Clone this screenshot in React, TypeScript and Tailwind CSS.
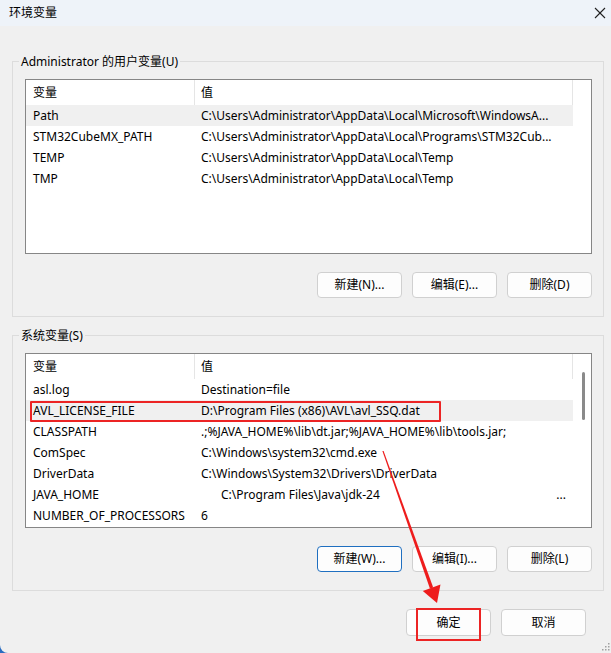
type Row = { name: string; value: string; pad?: boolean; more?: boolean; selected?: boolean; marked?: boolean };

const userVars: Row[] = [
  { name: "Path", value: "C:\\Users\\Administrator\\AppData\\Local\\Microsoft\\WindowsA...", selected: true },
  { name: "STM32CubeMX_PATH", value: "C:\\Users\\Administrator\\AppData\\Local\\Programs\\STM32Cub..." },
  { name: "TEMP", value: "C:\\Users\\Administrator\\AppData\\Local\\Temp" },
  { name: "TMP", value: "C:\\Users\\Administrator\\AppData\\Local\\Temp" },
];

const systemVars: Row[] = [
  { name: "asl.log", value: "Destination=file" },
  { name: "AVL_LICENSE_FILE", value: "D:\\Program Files (x86)\\AVL\\avl_SSQ.dat", selected: true, marked: true },
  { name: "CLASSPATH", value: ".;%JAVA_HOME%\\lib\\dt.jar;%JAVA_HOME%\\lib\\tools.jar;" },
  { name: "ComSpec", value: "C:\\Windows\\system32\\cmd.exe" },
  { name: "DriverData", value: "C:\\Windows\\System32\\Drivers\\DriverData" },
  { name: "JAVA_HOME", value: "C:\\Program Files\\Java\\jdk-24", pad: true, more: true },
  { name: "NUMBER_OF_PROCESSORS", value: "6" },
];

const VarList = ({ rows, scroll }: { rows: Row[]; scroll?: boolean }) => (
  <div className="flex h-[175px] w-full border border-[#868686] bg-white">
    <div className="w-[547px] overflow-hidden">
      <div className="flex h-[25px] items-center border-r border-[#e5e5e5]">
        <div className="flex h-full w-[169px] shrink-0 items-center border-r border-[#e5e5e5] pl-[7px]">变量</div>
        <div className="pl-[6px]">值</div>
      </div>
      {rows.map((r) => (
        <div key={r.name} className={`relative flex h-[21px] items-center whitespace-nowrap ${r.selected ? "bg-[#f0f0f0]" : ""}`}>
          <div className="w-[169px] shrink-0 pl-[7px]">{r.name}</div>
          <div className={`flex flex-1 ${r.pad ? "pl-[26px]" : "pl-[6px]"}`}>
            <span>{r.value}</span>
            {r.more && <span className="ml-auto pr-[7px]">...</span>}
          </div>
          {r.marked && <div className="absolute left-[4px] top-[1px] h-[21px] w-[411px] rounded-[1px] border-2 border-[#ec2424]" />}
        </div>
      ))}
    </div>
    <div className="flex w-[18px] justify-center pl-[2px] pt-[18px]">
      {scroll && <div className="h-[48px] w-[3px] rounded-full bg-[#8a8a8a]" />}
    </div>
  </div>
);

const Btn = ({ label, focus }: { label: string; focus?: boolean }) => (
  <button
    className={`h-full w-[85px] rounded-[4px] border bg-[#fdfdfd] text-[12px] text-black ${
      focus ? "border-[#1f6fc0]" : "border-[#d0d0d0]"
    }`}
  >
    {label}
  </button>
);

const Group = ({ title, children, top }: { title: string; children: React.ReactNode; top: string }) => (
  <div className={`ml-[12px] w-[592px] border border-[#dcdcdc] pl-[12px] pr-[11px] pb-[18px] ${top}`}>
    <div className="-mt-[9px] -ml-[6px] w-fit bg-[#f0f0f0] px-[2px] leading-[17px]">{title}</div>
    {children}
  </div>
);

export default function App() {
  return (
    <div className="h-[653px] w-[611px] bg-[#2a6cc0]">
      <div
        className="relative h-full w-full overflow-hidden rounded-bl-[8px] bg-[#f0f0f0] text-[12px] text-black"
        style={{ fontFamily: '"Noto Sans", "Noto Sans CJK SC", sans-serif' }}
      >
        <div className="flex h-[26px] w-[611px] items-center bg-[#eef3f9] pl-[9px]">
          <span>环境变量</span>
          <span className="ml-auto mr-[5px] flex h-[12px] w-[12px] items-center justify-center">
            <svg width="12" height="12" viewBox="0 0 12 12" style={{ display: "block" }}>
              <line x1="1" y1="1" x2="11" y2="11" stroke="#222222" strokeWidth="1.1" />
              <line x1="11" y1="1" x2="1" y2="11" stroke="#222222" strokeWidth="1.1" />
            </svg>
          </span>
        </div>

        <Group title="Administrator 的用户变量(U)" top="mt-[35px]">
          <div className="mt-[9px]">
            <VarList rows={userVars} />
          </div>
          <div className="mt-[18px] flex h-[26px] justify-end gap-[10px]">
            <Btn label="新建(N)..." />
            <Btn label="编辑(E)..." />
            <Btn label="删除(D)" />
          </div>
        </Group>

        <Group title="系统变量(S)" top="mt-[18px]">
          <div className="mt-[9px]">
            <VarList rows={systemVars} scroll />
          </div>
          <div className="mt-[18px] flex h-[26px] justify-end gap-[10px]">
            <Btn label="新建(W)..." focus />
            <Btn label="编辑(I)..." />
            <Btn label="删除(L)" />
          </div>
        </Group>

        <div className="mt-[18px] flex h-[27px] justify-end gap-[10px] pr-[25px]">
          <div className="relative h-full">
            <Btn label="确定" />
            <div className="absolute left-[10px] top-[-1px] h-[33px] w-[65px] border-2 border-[#ec2424]" />
          </div>
          <Btn label="取消" />
        </div>

        {/* annotation arrow */}
        <svg className="pointer-events-none absolute left-0 top-0" width="611" height="653" viewBox="0 0 611 653">
          <polygon points="382.4,451 383.6,451 433.2,587.4 429.9,588.6" fill="#ee1c1c" />
          <polygon points="437,603 440.5,584.5 422.8,591" fill="#ee1c1c" />
        </svg>

        {/* resize grip */}
        <svg className="absolute bottom-[2px] right-[1px]" width="8" height="8" viewBox="0 0 8 8">
          {[
            [6, 0],
            [3, 3],
            [6, 3],
            [0, 6],
            [3, 6],
            [6, 6],
          ].map(([x, y]) => (
            <rect key={`${x}-${y}`} x={x} y={y} width="1.5" height="1.5" fill="#a0a0a0" />
          ))}
        </svg>
      </div>
    </div>
  );
}
